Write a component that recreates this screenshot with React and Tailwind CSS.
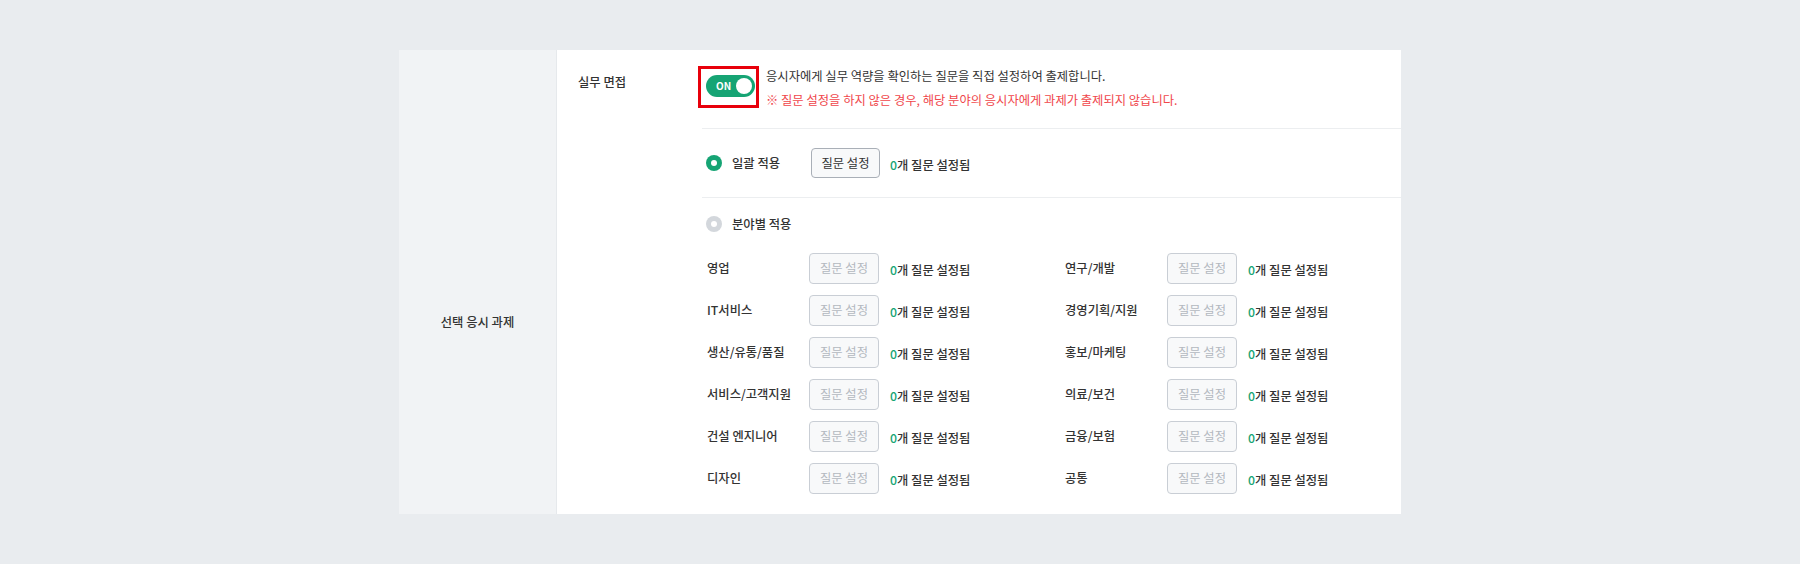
import React from 'react';

const FIELDS = [
  ['영업', '연구/개발'],
  ['IT서비스', '경영기획/지원'],
  ['생산/유통/품질', '홍보/마케팅'],
  ['서비스/고객지원', '의료/보건'],
  ['건설 엔지니어', '금융/보험'],
  ['디자인', '공통'],
];

const Radio = ({ checked }) => (
  <span
    className={
      checked
        ? 'w-4 h-4 rounded-full bg-[#16a474] flex items-center justify-center'
        : 'w-4 h-4 rounded-full bg-[#d3d7dc] flex items-center justify-center'
    }
  >
    <span className="w-[6px] h-[6px] rounded-full bg-white" />
  </span>
);

const SetButton = ({ disabled }) => (
  <button
    className={
      disabled
        ? 'w-[70px] h-[31px] rounded-[4px] border border-[#c9ced5] bg-[#f8f9fa] text-[#b3b8bf] text-[12.3px]'
        : 'w-[69px] h-[30px] rounded-[4px] border border-[#a9afb7] bg-[#f8f9fa] text-[#333] text-[12.3px]'
    }
  >
    질문 설정
  </button>
);

const Count = () => (
  <span className="text-[12.3px] font-medium text-[#333]">
    <span className="text-[#16a474]">0</span>개 질문 설정됨
  </span>
);

const FieldCell = ({ name }) => (
  <div className="flex items-center h-[42px]">
    <span className="w-[102px] text-[12.3px] font-medium text-[#333]">{name}</span>
    <SetButton disabled />
    <span className="ml-[11px]">
      <Count />
    </span>
  </div>
);

export default function App() {
  return (
    <div className="min-h-[564px] bg-[#e9ecef] pt-[50px] font-['Noto_Sans_CJK_KR',sans-serif]">
      <div className="mx-auto w-[1002px] h-[464px] flex bg-white">
        {/* label column */}
        <div className="w-[158px] shrink-0 bg-[#f1f3f5] border-r border-[#e6e9ec] flex items-center justify-center pt-[80px]">
          <span className="text-[12.3px] font-medium text-[#333]">선택 응시 과제</span>
        </div>

        {/* content */}
        <div className="flex-1 flex pl-[21px]">
          <div className="w-[124px] shrink-0 pt-5">
            <span className="block text-[12.3px] font-medium text-[#333] leading-6">실무 면접</span>
          </div>

          <div className="flex-1 flex flex-col">
            {/* header */}
            <div className="flex pt-[14px] pb-4 pl-1">
              <div className="relative mt-[11px] w-[49px] h-[22px] shrink-0">
                <div className="w-[49px] h-[22px] rounded-full bg-[#16a474] flex items-center justify-between pl-[10px] pr-[3px]">
                  <span className="text-[10px] font-bold text-white leading-none">ON</span>
                  <span className="w-4 h-4 rounded-full bg-white" />
                </div>
                <span className="absolute -left-2 -right-1 -top-[9px] -bottom-[11px] border-[3px] border-[#e8000b]" />
              </div>
              <div className="ml-[11px] flex flex-col text-[12.3px] leading-6">
                <span className="text-[#333]">응시자에게 실무 역량을 확인하는 질문을 직접 설정하여 출제합니다.</span>
                <span className="text-[#f0464b]">※ 질문 설정을 하지 않은 경우, 해당 분야의 응시자에게 과제가 출제되지 않습니다.</span>
              </div>
            </div>

            {/* 일괄 적용 */}
            <div className="border-t border-[#eceef0] h-[69px] flex items-center pl-1">
              <div className="w-[105px] flex items-center gap-[10px]">
                <Radio checked />
                <span className="text-[12.3px] font-medium text-[#333]">일괄 적용</span>
              </div>
              <SetButton />
              <span className="ml-[10px]">
                <Count />
              </span>
            </div>

            {/* 분야별 적용 */}
            <div className="border-t border-[#eceef0] pt-[14px] pl-1">
              <div className="flex items-center gap-[10px] h-6">
                <Radio />
                <span className="text-[12.3px] font-medium text-[#333]">분야별 적용</span>
              </div>
              <div className="mt-[11px] grid grid-cols-[358px_1fr] pl-[1px]">
                {FIELDS.map(([a, b]) => (
                  <React.Fragment key={a}>
                    <FieldCell name={a} />
                    <FieldCell name={b} />
                  </React.Fragment>
                ))}
              </div>
            </div>
          </div>
        </div>
      </div>
    </div>
  );
}
